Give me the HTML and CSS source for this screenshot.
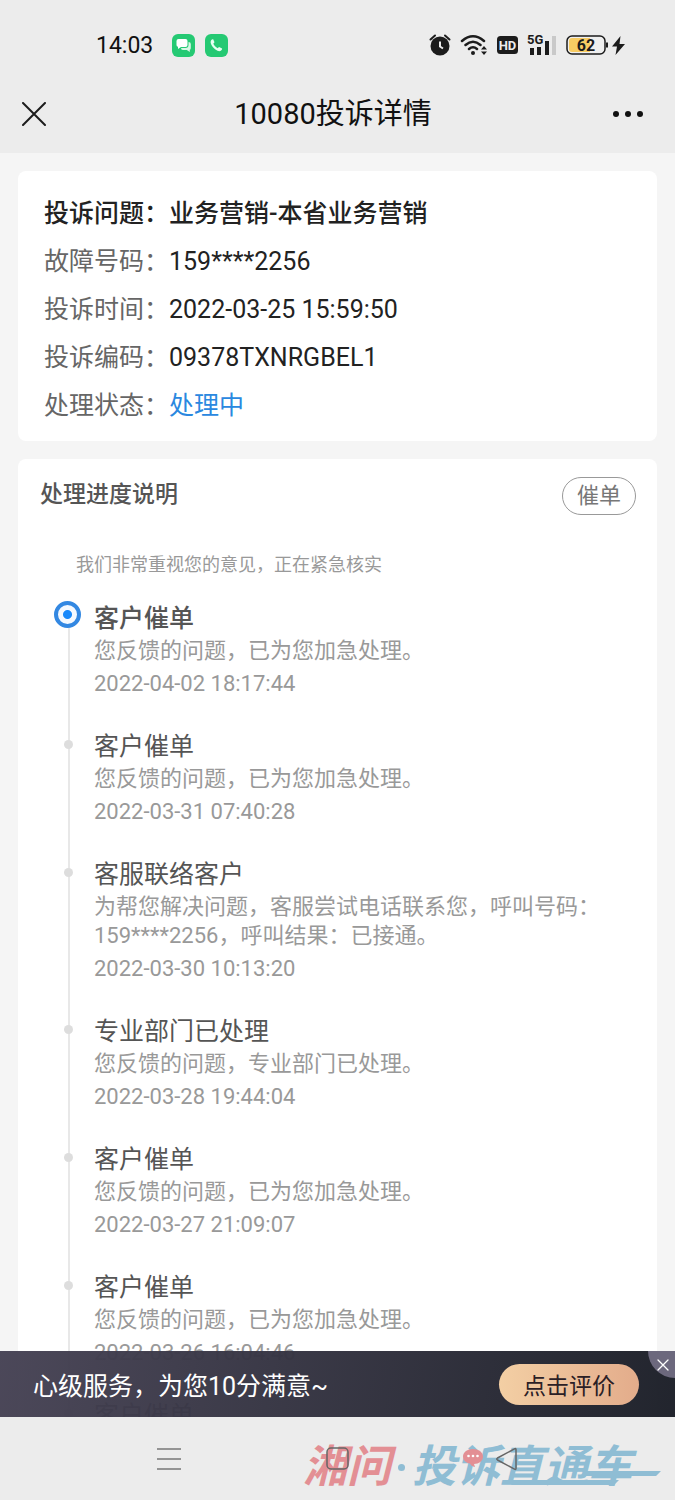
FILE: index.html
```html
<!DOCTYPE html>
<html lang="zh-CN">
<head>
<meta charset="UTF-8">
<meta name="viewport" content="width=device-width, initial-scale=1.0">
<title>10080投诉详情</title>
<link rel="stylesheet" href="styles.css">
</head>
<body>
<div class="screen">
  <header class="top">
    <div class="status-bar">
      <span class="time">14:03</span>
      <div class="status-apps">
        <svg width="23" height="23" viewBox="0 0 23 23">
          <rect width="23" height="23" rx="6" fill="#25c973"/>
          <path d="M6.500 5h7q2 0 2 2v4q0 2-2 2H9l-3 2v-2.200Q4.500 12.500 4.500 11V7q0-2 2-2z" fill="#fff"/>
          <path d="M16.500 8q2.300 0 2.300 2v4q0 1.500-1 1.800V18l-3-2h-4q-1.800 0-1.800-2h4.500q3 0 3-3z" fill="#d9f7e6"/>
        </svg>
        <svg width="23" height="23" viewBox="0 0 23 23">
          <rect width="23" height="23" rx="6" fill="#25c973"/>
          <path d="M6 6.500q1-1.500 2.200-1.200l1.300 3-1.200 1.500q1.200 2.800 4.200 4.400l1.600-1.300 3 1.500q.2 1.300-1.300 2.400-1.300.8-3.300 0Q7 14 5.700 9q-.3-1.500.3-2.500z" fill="#e6fff1"/>
        </svg>
      </div>
      <div class="status-icons">
        <svg width="22" height="24" viewBox="0 0 22 24">
          <circle cx="11" cy="13" r="9.500" fill="#1c1c1c"/>
          <path d="M1.500 6.500L6 2.500M20.500 6.500L16 2.500" stroke="#1c1c1c" stroke-width="2" stroke-linecap="round"/>
          <path d="M11 8.500v5l3 2" stroke="#ececec" stroke-width="2" fill="none"/>
        </svg>
        <svg class="wifi" width="28" height="24" viewBox="0 0 28 24" fill="none" stroke="#1c1c1c" stroke-width="2.500" stroke-linecap="round">
          <path d="M2 8q11-9.500 22 0M5.500 12q7.500-6.500 15 0M9 16q4-3.500 8 0"/>
          <circle cx="13" cy="20" r="2" fill="#1c1c1c" stroke="none"/>
          <path d="M21 16.500l3-3.500 3 3.500zM21 18.500l3 3.500 3-3.500z" fill="#1c1c1c" stroke="none"/>
        </svg>
        <svg width="21" height="24" viewBox="0 0 21 24">
          <rect y="3" width="21" height="18" rx="3.500" fill="#1c1c1c"/>
          <text class="hd-text" x="10.500" y="17" text-anchor="middle">HD</text>
        </svg>
        <svg class="signal" width="30" height="24" viewBox="0 0 30 24">
          <text class="net-text" x="0" y="11">5G</text>
          <path d="M3 15h4v7H3zM10 14h4v8h-4zM18 8h4v14h-4z" fill="#1c1c1c"/>
          <path d="M25 3h4v19h-4z" fill="#c9c9c9"/>
        </svg>
        <svg class="battery" width="60" height="24" viewBox="0 0 60 24">
          <rect x="1" y="3" width="38" height="18" rx="5" fill="#efefef" stroke="#1c1c1c" stroke-width="1.500"/>
          <path d="M6 5h18v14H6q-3 0-3-3V8q0-3 3-3z" fill="#f8cc63"/>
          <path d="M41 9.500v5" stroke="#1c1c1c" stroke-width="2"/>
          <text class="bat-text" x="20" y="18" text-anchor="middle">62</text>
          <path d="M54.500 3L46 13.500h5L49.500 22 59 11h-5.500z" fill="#1c1c1c"/>
        </svg>
      </div>
    </div>
    <div class="nav-bar">
      <button class="icon-button" aria-label="关闭">
        <svg width="24" height="24" viewBox="0 0 24 24"><path d="M1 1l22 22M23 1L1 23" stroke="#1c1c1c" stroke-width="2" stroke-linecap="round"/></svg>
      </button>
      <h1 class="page-title">10080投诉详情</h1>
      <button class="icon-button more" aria-label="更多">
        <svg width="32" height="8" viewBox="0 0 32 8" fill="#111"><circle cx="4" cy="4" r="3"/><circle cx="16" cy="4" r="3"/><circle cx="28" cy="4" r="3"/></svg>
      </button>
    </div>
  </header>

  <main class="content">
    <dl class="card detail">
      <div class="row strong"><dt>投诉问题：</dt><dd>业务营销-本省业务营销</dd></div>
      <div class="row"><dt>故障号码：</dt><dd>159****2256</dd></div>
      <div class="row"><dt>投诉时间：</dt><dd>2022-03-25 15:59:50</dd></div>
      <div class="row"><dt>投诉编码：</dt><dd>09378TXNRGBEL1</dd></div>
      <div class="row"><dt>处理状态：</dt><dd class="pending">处理中</dd></div>
    </dl>

    <section class="card progress">
      <div class="progress-head">
        <h2>处理进度说明</h2>
        <button class="urge-button">催单</button>
      </div>
      <p class="note">我们非常重视您的意见，正在紧急核实</p>
      <ol class="timeline">
        <li class="step current">
          <h3>客户催单</h3>
          <p>您反馈的问题，已为您加急处理。</p>
          <time>2022-04-02 18:17:44</time>
        </li>
        <li class="step">
          <h3>客户催单</h3>
          <p>您反馈的问题，已为您加急处理。</p>
          <time>2022-03-31 07:40:28</time>
        </li>
        <li class="step">
          <h3>客服联络客户</h3>
          <p>为帮您解决问题，客服尝试电话联系您，呼叫号码：159****2256，呼叫结果：已接通。</p>
          <time>2022-03-30 10:13:20</time>
        </li>
        <li class="step">
          <h3>专业部门已处理</h3>
          <p>您反馈的问题，专业部门已处理。</p>
          <time>2022-03-28 19:44:04</time>
        </li>
        <li class="step">
          <h3>客户催单</h3>
          <p>您反馈的问题，已为您加急处理。</p>
          <time>2022-03-27 21:09:07</time>
        </li>
        <li class="step">
          <h3>客户催单</h3>
          <p>您反馈的问题，已为您加急处理。</p>
          <time>2022-03-26 16:04:46</time>
        </li>
        <li class="step">
          <h3>客户催单</h3>
        </li>
      </ol>
    </section>

    <!-- Rating banner, floats over the end of the list -->
    <aside class="banner">
      <span>心级服务，为您10分满意~</span>
      <button class="rate-button">点击评价</button>
      <button class="banner-close" aria-label="关闭">
        <svg width="12" height="12" viewBox="0 0 12 12"><path d="M1 1l10 10M11 1L1 11" stroke="#fff" stroke-width="1.300" stroke-linecap="round"/></svg>
      </button>
    </aside>
  </main>

  <footer class="system-nav">
    <div class="logo">
      <span class="logo-red">湘问</span>
      <span class="logo-dot"></span>
      <span class="logo-blue">投诉直通车</span>
      <svg class="logo-lines" width="150" height="14" viewBox="0 0 150 14" fill="#85b8d2"><path d="M76 0h74l-5 5H74zM4 9h104l-5 5H0z"/></svg>
      <svg class="logo-bubble" width="20" height="18" viewBox="0 0 20 18"><path d="M10 0c5.500 0 10 3 10 7.500S16 15 11 15l1 3q-4-1-5-3.500C3 14 0 11.500 0 7.500 0 3 4.500 0 10 0z" fill="#e3868b"/><circle cx="5.500" cy="7" r="1.300" fill="#fff"/><circle cx="10" cy="7" r="1.300" fill="#fff"/><circle cx="14.500" cy="7" r="1.300" fill="#fff"/></svg>
    </div>
    <button class="nav-key" aria-label="菜单">
      <svg width="24" height="24" viewBox="0 0 24 24"><path d="M0 2h24M0 12h24M0 22h24" stroke="#777" stroke-width="1.500"/></svg>
    </button>
    <button class="nav-key" aria-label="主页">
      <svg width="24" height="24" viewBox="0 0 24 24"><rect x="2" y="1" width="21" height="21" rx="4" fill="none" stroke="#666" stroke-width="1.500"/></svg>
    </button>
    <button class="nav-key" aria-label="返回">
      <svg width="24" height="24" viewBox="0 0 24 24"><path d="M22 2.500v19q0 1.500-1.500.7L3.500 13q-1.500-1 0-2l17-9.200Q22 1 22 2.500z" fill="none" stroke="#666" stroke-width="1.500"/></svg>
    </button>
  </footer>
</div>
</body>
</html>
```
FILE: styles.css
```css
*,
*::before,
*::after {
  box-sizing: border-box;
}
body {
  margin: 0;
  background-color: #f5f5f5;
  color: #222;
  font-family: Roboto, "Noto Sans CJK SC", sans-serif;
}
h1, h2, h3, p, dl, dd, ol {
  margin: 0;
  padding: 0;
}
button {
  padding: 0;
  border: none;
  background: none;
  font-family: inherit;
  cursor: pointer;
}
svg {
  display: block;
}
.screen {
  display: flex;
  flex-direction: column;
  height: 100vh;
}

/* Status bar and title */
.top {
  background-color: #ececec;
}
.status-bar {
  display: flex;
  align-items: center;
  height: 90px;
  padding: 0 49px 0 96px;
}
.time {
  font-size: 23px;
  color: #111;
}
.status-apps {
  display: flex;
  gap: 10px;
  margin-left: 19px;
}
.status-icons {
  display: flex;
  gap: 9px;
  margin-left: auto;
}
.hd-text {
  font-size: 13px;
  font-weight: 700;
  fill: #ececec;
}
.net-text {
  font-size: 13px;
  font-weight: 700;
  fill: #1c1c1c;
}
.bat-text {
  font-size: 16px;
  font-weight: 700;
  fill: #1c1c1c;
}
.nav-bar {
  display: grid;
  grid-template-columns: 1fr auto 1fr;
  align-items: center;
  height: 63px;
  padding: 0 31px 16px 22px;
}
.icon-button {
  justify-self: start;
}
.more {
  justify-self: end;
}
.page-title {
  font-size: 29px;
  font-weight: 400;
  line-height: 40px;
  color: #111;
}

/* Cards */
.content {
  position: relative;
  flex: 1;
  min-height: 0;
  padding: 18px;
  overflow: hidden;
}
.card {
  border-radius: 8px;
  background-color: #fff;
}
.detail {
  margin-bottom: 18px;
  padding: 19px 26px 11px;
}
.row {
  display: flex;
  font-size: 25px;
  line-height: 48px;
}
.row dt {
  color: #666;
}
.row .pending {
  color: #2a88e0;
}
.strong,
.strong dt {
  font-weight: 500;
  color: #222;
}
.progress {
  padding: 18px 21px 0 22px;
}
.progress-head {
  display: flex;
  justify-content: space-between;
}
.progress-head h2 {
  font-size: 23px;
  font-weight: 500;
  line-height: 36px;
  color: #555;
}
.urge-button {
  width: 74px;
  height: 38px;
  border: 1px solid #999;
  border-radius: 19px;
  font-size: 22px;
  line-height: 36px;
  color: #777;
}
.note {
  margin: 36px 0 22px 36px;
  font-size: 18px;
  line-height: 28px;
  color: #999;
}

/* Timeline */
.timeline {
  margin-left: 28px;
  list-style: none;
}
.step {
  position: relative;
  padding: 0 0 26px 26px;
}
.step::before {
  content: "";
  position: absolute;
  top: 15px;
  bottom: -15px;
  left: 0;
  width: 2px;
  background-color: #e8e8e8;
}
.step::after {
  content: "";
  position: absolute;
  top: 11px;
  left: -4px;
  width: 9px;
  height: 9px;
  border-radius: 50%;
  background-color: #ddd;
}
.step h3 {
  font-size: 25px;
  font-weight: 400;
  line-height: 35px;
  color: #555;
}
.step p {
  font-size: 22px;
  line-height: 29px;
  color: #999;
}
.step time {
  display: block;
  font-size: 22px;
  line-height: 38px;
  color: #999;
}
.current h3 {
  font-weight: 500;
}
.current::after {
  top: 0;
  left: -14px;
  width: 27px;
  height: 27px;
  border: 4px solid #3388e2;
  background: radial-gradient(circle, #1989fa 4px, #f4f9ff 5px);
}

/* Banner */
.banner {
  position: absolute;
  right: 0;
  bottom: 0;
  left: 0;
  display: flex;
  align-items: center;
  justify-content: space-between;
  height: 66px;
  padding: 0 36px 0 33px;
  overflow: hidden;
  background: linear-gradient(100deg, rgba(70, 66, 84, 0.97), rgba(27, 30, 39, 0.97));
  font-size: 25px;
  color: #fff;
}
.rate-button {
  width: 140px;
  height: 41px;
  border-radius: 21px;
  background: linear-gradient(90deg, #f3cfa4, #e3ac8b);
  font-size: 23px;
  color: #2b2025;
}
.banner-close {
  position: absolute;
  top: 0;
  right: 0;
  width: 27px;
  height: 27px;
  padding-left: 9px;
  border-bottom-left-radius: 27px;
  background-color: #6c687d;
}

/* System navigation */
.system-nav {
  position: relative;
  display: flex;
  align-items: center;
  justify-content: space-around;
  height: 83px;
  padding: 0 85px;
  background-color: #ececec;
}
.nav-key {
  z-index: 1;
}
.logo {
  position: absolute;
  top: 30px;
  right: 14px;
  display: flex;
  align-items: center;
  width: 358px;
  font-size: 44px;
  font-style: italic;
  font-weight: 700;
  line-height: 40px;
  white-space: nowrap;
  opacity: 0.9;
  pointer-events: none;
}
.logo-red {
  color: #e3868b;
}
.logo-blue {
  color: #85b8d2;
}
.logo-dot {
  width: 7px;
  height: 7px;
  margin: 0 7px;
  border-radius: 50%;
  background-color: #85b8d2;
}
.logo-lines {
  position: absolute;
  right: 0;
  bottom: 2px;
}
.logo-bubble {
  position: absolute;
  top: 2px;
  left: 160px;
}
```
